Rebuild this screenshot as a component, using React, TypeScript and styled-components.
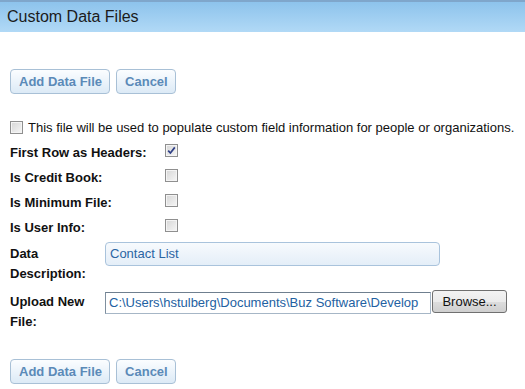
import React from 'react';
import styled, {createGlobalStyle} from "styled-components";

const GlobalStyle = createGlobalStyle`
    body {
        margin: 0;
        background: #ffffff;
        font-family: "Liberation Sans", Arial, sans-serif;
        font-size: 13px;
        color: #111111;
    }
`

const checkRows = [
    {label: 'First Row as Headers:', checked: true},
    {label: 'Is Credit Book:', checked: false},
    {label: 'Is Minimum File:', checked: false},
    {label: 'Is User Info:', checked: false},
]

const Check = ({checked}: { checked?: boolean }) => (
    <CheckBox>
        {checked && (
            <svg width="9" height="9" viewBox="0 0 9 9">
                <path d="M1.2 4.6 L3.4 7 L7.8 1.4" fill="none" stroke="#2f3f86" strokeWidth="1.7"/>
            </svg>
        )}
    </CheckBox>
)

const Actions = ({top}: { top: number }) => (
    <ButtonRow $top={top}>
        <ActionButton>Add Data File</ActionButton>
        <ActionButton>Cancel</ActionButton>
    </ButtonRow>
)

export default function App() {
    return (
        <>
            <GlobalStyle/>
            <Page>
                <Header>Custom Data Files</Header>
                <Body>
                    <Actions top={37}/>

                    <Notice>
                        <Check/>
                        <span>This file will be used to populate custom field information for people or organizations.</span>
                    </Notice>

                    <CheckGrid>
                        {checkRows.map(row => (
                            <React.Fragment key={row.label}>
                                <Label>{row.label}</Label>
                                <CheckCell><Check checked={row.checked}/></CheckCell>
                            </React.Fragment>
                        ))}
                    </CheckGrid>

                    <FieldGrid>
                        <FieldLabel>Data Description:</FieldLabel>
                        <div>
                            <TextBox>Contact List</TextBox>
                        </div>

                        <FieldLabel>Upload New File:</FieldLabel>
                        <FileRow>
                            <FilePath>C:\Users\hstulberg\Documents\Buz Software\Develop</FilePath>
                            <BrowseButton>Browse...</BrowseButton>
                        </FileRow>
                    </FieldGrid>

                    <Actions top={27}/>
                </Body>
            </Page>
        </>
    );
}

const Page = styled.div`
    width: 525px;
    height: 389px;
    overflow: hidden;
`

const Header = styled.div`
    height: 30px;
    border-top: 2px solid #7fa6cb;
    background: linear-gradient(#8dc3ec, #b1d9f6);
    padding-left: 7px;
    font-size: 16px;
    line-height: 29px;
    color: #1b1b1b;
`

const Body = styled.div`
    padding-left: 10px;
`

const ButtonRow = styled.div<{ $top: number }>`
    display: flex;
    gap: 6px;
    margin-top: ${p => p.$top}px;
`

const ActionButton = styled.button`
    height: 25px;
    padding: 0 7px 0 8px;
    border: 1px solid #a8c0d6;
    border-radius: 4px;
    background: linear-gradient(#fbfdff, #dceaf6);
    font-family: "Liberation Sans", Arial, sans-serif;
    font-size: 13px;
    font-weight: bold;
    color: #5b8ab8;
`

const Notice = styled.div`
    display: flex;
    align-items: center;
    gap: 5px;
    height: 20px;
    margin-top: 23px;
`

const CheckBox = styled.span`
    display: inline-flex;
    align-items: center;
    justify-content: center;
    box-sizing: border-box;
    width: 13px;
    height: 13px;
    border: 1px solid #8f8f8f;
    box-shadow: inset 0 0 0 1px #f4f4f4;
    background: linear-gradient(135deg, #d6d6d6, #f6f6f6);
`

const CheckGrid = styled.div`
    display: grid;
    grid-template-columns: 155px auto;
    grid-auto-rows: 25px;
    align-items: center;
    margin-top: 3px;
`

const Label = styled.div`
    font-weight: bold;
`

const CheckCell = styled.div`
    display: flex;
    margin-top: -5px;
`

const FieldGrid = styled.div`
    display: grid;
    grid-template-columns: 95px 1fr;
    row-gap: 6px;
    margin-top: 2px;
`

const FieldLabel = styled.div`
    font-weight: bold;
    line-height: 20px;
    padding-top: 2px;
`

const TextBox = styled.div`
    box-sizing: border-box;
    width: 335px;
    height: 24px;
    padding-left: 4px;
    border: 1px solid #a9c3dc;
    border-radius: 4px;
    background: linear-gradient(#f7fafd, #e4eef8);
    line-height: 22px;
    color: #2b65a3;
`

const FileRow = styled.div`
    display: flex;
    align-items: flex-start;
`

const FilePath = styled.div`
    box-sizing: border-box;
    width: 326px;
    height: 22px;
    margin-top: 2px;
    padding-left: 3px;
    border: 1px solid #a6b6c6;
    border-top-color: #6f7f8f;
    border-left-color: #7f8f9f;
    background: #ffffff;
    line-height: 20px;
    white-space: nowrap;
    overflow: hidden;
    color: #2361a2;
`

const BrowseButton = styled.button`
    width: 75px;
    height: 23px;
    margin-left: 1px;
    border: 1px solid #707070;
    border-radius: 3px;
    background: linear-gradient(#f3f3f3 0%, #ebebeb 50%, #dddddd 51%, #cfcfcf 100%);
    font-family: "Liberation Sans", Arial, sans-serif;
    font-size: 13px;
    color: #111111;
`
